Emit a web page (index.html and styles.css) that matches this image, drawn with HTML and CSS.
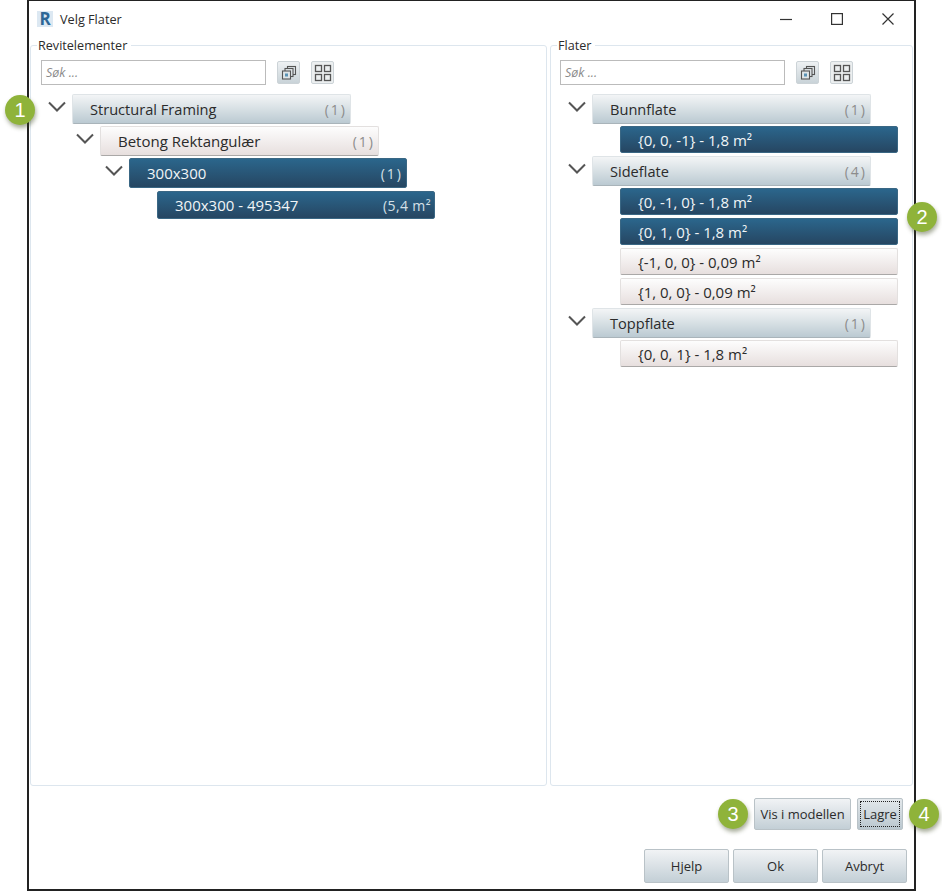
FILE: index.html
```html
<!DOCTYPE html>
<html lang="en">
  <head>
    <meta charset="utf-8" />
    <meta name="viewport" content="width=device-width,initial-scale=1.0" />
    <title>Velg Flater</title>
    <link rel="stylesheet" href="styles.css">
  </head>
  <body>
    <div class="window">
      <header class="titlebar">
        <span class="logo">R</span>
        <span class="title">Velg Flater</span>
        <div class="controls">
          <svg width="12" height="12" viewBox="0 0 12 12"><path d="M0 6.5h12" stroke="#333" stroke-width="1.2"/></svg>
          <svg width="12" height="12" viewBox="0 0 12 12"><rect x="0.6" y="0.6" width="10.8" height="10.8" fill="none" stroke="#333" stroke-width="1.2"/></svg>
          <svg width="12" height="12" viewBox="0 0 12 12"><path d="M0.5 0.5l11 11M11.5 0.5l-11 11" stroke="#333" stroke-width="1.2"/></svg>
        </div>
      </header>

      <div class="panels">
        <section class="panel panel-left">
          <span class="legend">Revitelementer</span>
          <div class="toolbar">
            <div class="search">Søk ...</div>
            <button class="tool" title="Kopier">
              <svg width="16" height="16" viewBox="0 0 16 16"><g fill="#dfe5e8" stroke="#555" stroke-width="1.1"><rect x="6.5" y="1.5" width="8" height="8"/><rect x="4" y="3.5" width="8" height="8"/><rect x="1.5" y="6" width="8" height="8"/></g><rect x="4" y="8.5" width="3" height="3" fill="#5b93b5"/></svg>
            </button>
            <button class="tool tool-plain" title="Rutenett">
              <svg width="18" height="18" viewBox="0 0 18 18"><g fill="none" stroke="#555" stroke-width="1.3"><rect x="1.5" y="1.5" width="6" height="6"/><rect x="10.5" y="1.5" width="6" height="6"/><rect x="1.5" y="10.5" width="6" height="6"/><rect x="10.5" y="10.5" width="6" height="6"/></g></svg>
            </button>
          </div>
          <div class="tree">
            <div class="row row-a depth-0">
              <svg class="chevron" width="18" height="11" viewBox="0 0 18 11"><path d="M1 1.5l8 8 8-8" fill="none" stroke="#555" stroke-width="2"/></svg>
              <div class="node node-group"><span>Structural Framing</span><span class="count">(1)</span></div>
            </div>
            <div class="row row-b depth-1">
              <svg class="chevron" width="18" height="11" viewBox="0 0 18 11"><path d="M1 1.5l8 8 8-8" fill="none" stroke="#555" stroke-width="2"/></svg>
              <div class="node node-light"><span>Betong Rektangulær</span><span class="count">(1)</span></div>
            </div>
            <div class="row row-c depth-2">
              <svg class="chevron" width="18" height="11" viewBox="0 0 18 11"><path d="M1 1.5l8 8 8-8" fill="none" stroke="#555" stroke-width="2"/></svg>
              <div class="node node-dark"><span>300x300</span><span class="count">(1)</span></div>
            </div>
            <div class="row row-d depth-3">
              <div class="node node-dark node-leaf-left"><span>300x300 - 495347</span><span class="count count-area">(5,4 m²</span></div>
            </div>
          </div>
        </section>

        <section class="panel panel-right">
          <span class="legend">Flater</span>
          <div class="toolbar">
            <div class="search">Søk ...</div>
            <button class="tool" title="Kopier">
              <svg width="16" height="16" viewBox="0 0 16 16"><g fill="#dfe5e8" stroke="#555" stroke-width="1.1"><rect x="6.5" y="1.5" width="8" height="8"/><rect x="4" y="3.5" width="8" height="8"/><rect x="1.5" y="6" width="8" height="8"/></g><rect x="4" y="8.5" width="3" height="3" fill="#5b93b5"/></svg>
            </button>
            <button class="tool tool-plain" title="Rutenett">
              <svg width="18" height="18" viewBox="0 0 18 18"><g fill="none" stroke="#555" stroke-width="1.3"><rect x="1.5" y="1.5" width="6" height="6"/><rect x="10.5" y="1.5" width="6" height="6"/><rect x="1.5" y="10.5" width="6" height="6"/><rect x="10.5" y="10.5" width="6" height="6"/></g></svg>
            </button>
          </div>
          <div class="tree tree-right">
            <div class="row group-row first">
              <svg class="chevron" width="18" height="11" viewBox="0 0 18 11"><path d="M1 1.5l8 8 8-8" fill="none" stroke="#555" stroke-width="2"/></svg>
              <div class="node node-group"><span>Bunnflate</span><span class="count">(1)</span></div>
            </div>
            <div class="node leaf node-dark"><span>{0, 0, -1} - 1,8 m²</span></div>
            <div class="row group-row">
              <svg class="chevron" width="18" height="11" viewBox="0 0 18 11"><path d="M1 1.5l8 8 8-8" fill="none" stroke="#555" stroke-width="2"/></svg>
              <div class="node node-group"><span>Sideflate</span><span class="count">(4)</span></div>
            </div>
            <div class="node leaf node-dark"><span>{0, -1, 0} - 1,8 m²</span></div>
            <div class="node leaf node-dark"><span>{0, 1, 0} - 1,8 m²</span></div>
            <div class="node leaf node-light"><span>{-1, 0, 0} - 0,09 m²</span></div>
            <div class="node leaf node-light"><span>{1, 0, 0} - 0,09 m²</span></div>
            <div class="row group-row">
              <svg class="chevron" width="18" height="11" viewBox="0 0 18 11"><path d="M1 1.5l8 8 8-8" fill="none" stroke="#555" stroke-width="2"/></svg>
              <div class="node node-group"><span>Toppflate</span><span class="count">(1)</span></div>
            </div>
            <div class="node leaf node-light"><span>{0, 0, 1} - 1,8 m²</span></div>
          </div>
        </section>
      </div>

      <div class="actions">
        <button class="btn btn-model">Vis i modellen</button>
        <button class="btn btn-save"><span class="focus">Lagre</span></button>
      </div>
      <div class="footer">
        <button class="btn btn-footer">Hjelp</button>
        <button class="btn btn-footer">Ok</button>
        <button class="btn btn-footer">Avbryt</button>
      </div>
    </div>

    <span class="marker marker-1">1</span>
    <span class="marker marker-2">2</span>
    <span class="marker marker-3">3</span>
    <span class="marker marker-4">4</span>
  </body>
</html>
```

FILE: styles.css
```css
* {
  box-sizing: border-box;
}

body {
  margin: 0;
  position: relative;
  width: 942px;
  height: 892px;
  overflow: hidden;
  background: #fff;
  font-family: "Open Sans", "Noto Sans", sans-serif;
  color: #2b2b2b;
}

.window {
  margin-left: 27px;
  width: 889px;
  height: 891px;
  border: 2px solid #222;
  border-top-width: 1px;
  background: #fff;
  display: flex;
  flex-direction: column;
}

.titlebar {
  display: flex;
  align-items: center;
  height: 35px;
  padding-left: 8px;
  flex-shrink: 0;
}
.logo {
  width: 16px;
  height: 16px;
  background: #dce8f2;
  color: #2d6796;
  font-weight: 700;
  font-size: 17px;
  line-height: 16px;
  text-align: center;
}
.title {
  margin-left: 7px;
  font-size: 12.7px;
}
.controls {
  margin-left: auto;
  display: flex;
  gap: 39px;
  padding-right: 20px;
}

.panels {
  margin-top: 9px;
  display: flex;
  gap: 3px;
  height: 741px;
  padding-left: 1px;
  flex-shrink: 0;
}
.panel {
  position: relative;
  border: 1px solid #dde6ee;
  border-radius: 3px;
}
.panel-left {
  width: 517px;
  padding-left: 10px;
}
.panel-right {
  width: 363px;
  padding-left: 9px;
}
.legend {
  position: absolute;
  top: -8px;
  left: 6px;
  padding: 0 4px 0 1px;
  background: #fff;
  font-size: 12.6px;
  line-height: 15px;
}

.toolbar {
  display: flex;
  align-items: center;
  margin-top: 14px;
  height: 25px;
}
.search {
  width: 225px;
  height: 25px;
  border: 1px solid #bbb;
  padding-left: 4px;
  font-size: 12.5px;
  line-height: 23px;
  font-style: italic;
  color: #8a8a8a;
}
.tool {
  width: 23px;
  height: 23px;
  margin-left: 11px;
  padding: 0;
  border: 1px solid #ccd3d7;
  border-radius: 2px;
  background: linear-gradient(#eef1f3, #c9d3d8);
  display: flex;
  align-items: center;
  justify-content: center;
}
.tool-plain {
  background: #eceff0;
}

.tree {
  margin-top: 9px;
}
.row {
  display: flex;
  align-items: flex-start;
  width: 279px;
  position: relative;
}
.chevron {
  position: absolute;
  left: -24px;
  top: 7px;
}
.depth-0 { margin-left: 31px; }
.depth-1 { margin-left: 59px; }
.depth-2 { margin-left: 88px; }
.depth-3 { margin-left: 116px; }

.row-a { height: 32px; }
.row-b { height: 32px; }
.row-c { height: 33px; width: 278px; }
.row-d { height: 28px; width: 278px; }
.row-a .node { height: 30px; }
.row-b .node { height: 30px; }
.row-c .node { height: 30px; }
.row-d .node { height: 28px; }

.node {
  width: 100%;
  display: flex;
  align-items: center;
  justify-content: space-between;
  padding: 0 3px 0 17px;
  border-radius: 2px;
  font-size: 15px;
  white-space: nowrap;
}
.count {
  color: #8c8c8c;
  font-size: 14px;
  letter-spacing: 2px;
}
.node-group {
  background: linear-gradient(#f3f5f6, #bbcad2);
  border: 1px solid #dfe4e7;
  border-bottom-color: #a9b4ba;
  font-size: 14.6px;
}
.node-light {
  background: linear-gradient(#fdfdfd, #e7dfde);
  border: 1px solid #e3e0df;
  border-bottom-color: #aaa8a7;
}
.node-dark {
  background: linear-gradient(#2b668c, #264662);
  border: 1px solid #3a6784;
  color: #f1f5f7;
}
.node-dark .count {
  color: #d5e0e7;
}
.count-area {
  letter-spacing: 0.4px;
}
.node-leaf-left {
  padding-right: 3px;
}

.tree-right {
  margin-left: 32px;
}
.group-row {
  height: 30px;
  margin-top: 1px;
}
.group-row.first {
  margin-top: 0;
}
.group-row .node {
  height: 30px;
}
.leaf {
  width: 278px;
  height: 27px;
  margin: 1px 0 3px 28px;
}
.group-row + .leaf {
  margin-top: 2px;
}

.actions {
  display: flex;
  justify-content: flex-end;
  gap: 6px;
  margin-top: 12px;
  padding-right: 11px;
}
.footer {
  display: flex;
  justify-content: flex-end;
  gap: 4px;
  margin-top: 19px;
  padding-right: 7px;
}
.btn {
  padding: 0;
  border: 1px solid #b9c2c7;
  border-radius: 2px;
  background: linear-gradient(#f1f3f5, #c3cfd6);
  font-family: inherit;
  font-size: 13px;
  color: #2b2b2b;
}
.btn-model {
  width: 97px;
  height: 32px;
}
.btn-save {
  width: 46px;
  height: 32px;
  padding: 2px;
  background: linear-gradient(#e3e8eb, #bac7cf);
}
.focus {
  display: flex;
  align-items: center;
  justify-content: center;
  height: 100%;
  border: 1px dotted #222;
}
.btn-footer {
  width: 85px;
  height: 34px;
}

.marker {
  position: absolute;
  width: 30px;
  height: 30px;
  border-radius: 50%;
  background: #8fb33a;
  box-shadow: 1px 3px 4px rgba(60, 70, 30, 0.45);
  color: #fff;
  font-family: "Liberation Sans", sans-serif;
  font-size: 20px;
  line-height: 30px;
  text-align: center;
}
.marker-1 { left: 5px; top: 95px; }
.marker-2 { left: 907px; top: 202px; }
.marker-3 { left: 718px; top: 799px; }
.marker-4 { left: 909px; top: 799px; }
```
